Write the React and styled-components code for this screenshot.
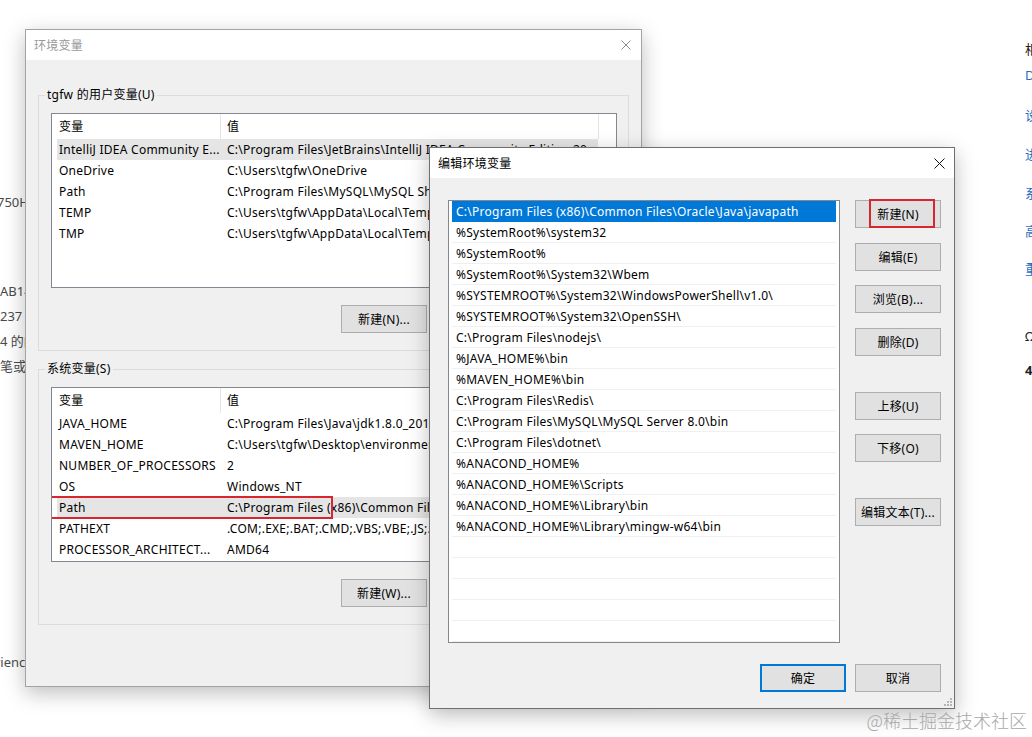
import React from "react";
import styled, { createGlobalStyle, css } from "styled-components";

const UI_FONT = `"Noto Sans", "Noto Sans CJK SC", sans-serif`;

const GlobalStyle = createGlobalStyle`
  html, body {
    margin: 0;
    padding: 0;
    background: #fff;
  }
  body {
    font-family: ${UI_FONT};
  }
  * {
    box-sizing: border-box;
  }
`;

const Desktop = styled.div`
  position: relative;
  width: 1032px;
  height: 737px;
  overflow: hidden;
  background: #fff;
  display: flex;
  justify-content: space-between;
`;

/* page text peeking out from behind the windows */
const Strip = styled.div`
  width: ${(p) => p.$w}px;
  padding-top: ${(p) => p.$top}px;
  overflow: hidden;
  display: flex;
  flex-direction: column;
  font-family: ${UI_FONT};
  font-size: 13px;
  color: #4a4a4a;
`;

const StripLine = styled.div`
  height: 25px;
  line-height: 25px;
  margin-top: ${(p) => p.$gap || 0}px;
  white-space: nowrap;
  text-indent: ${(p) => p.$shift || 0}px;
  color: ${(p) => (p.$link ? "#1e70c1" : p.$dark ? "#222" : "inherit")};
  font-weight: ${(p) => (p.$bold ? 700 : 400)};
`;

const Window = styled.section`
  position: absolute;
  left: ${(p) => p.$x}px;
  top: ${(p) => p.$y}px;
  width: ${(p) => p.$w}px;
  height: ${(p) => p.$h}px;
  background: #f0f0f0;
  border: 1px solid ${(p) => (p.$active ? "#6f6f6f" : "#a3a3a3")};
  box-shadow: 0 6px 20px rgba(0, 0, 0, 0.26);
  display: flex;
  flex-direction: column;
  font-family: ${UI_FONT};
  font-size: 12px;
  letter-spacing: 0.25px;
  color: #000;
`;

const TitleBar = styled.header`
  height: 30px;
  flex-shrink: 0;
  background: #fff;
  display: flex;
  align-items: center;
  justify-content: space-between;
`;

const Title = styled.span`
  padding-left: 8px;
  font-size: 12px;
  color: ${(p) => (p.$active ? "#000" : "#999")};
`;

const CloseBox = styled.div`
  width: 30px;
  height: 30px;
  display: flex;
  align-items: center;
  justify-content: center;
`;

const Body = styled.div`
  flex: 1;
  display: flex;
  flex-direction: column;
  padding: 0 12px;
`;

const GroupBox = styled.fieldset`
  margin: ${(p) => p.$top}px 0 0;
  padding: 10px 11px 17px 12px;
  border: 1px solid #dcdcdc;
  min-width: 0;
`;

const Legend = styled.legend`
  margin-left: -6px;
  padding: 0 2px;
  line-height: 16px;
  font-size: 12px;
`;

const VarList = styled.div`
  height: 175px;
  background: #fff;
  border: 1px solid #828790;
  overflow: hidden;
  display: flex;
  flex-direction: column;
`;

const ListHead = styled.div`
  display: flex;
  height: 25px;
  flex-shrink: 0;
`;

const HeadCell = styled.div`
  width: ${(p) => p.$w}px;
  padding-left: ${(p) => p.$pad}px;
  line-height: 25px;
  border-right: 1px solid #e5e5e5;
`;

const VarRow = styled.div`
  position: relative;
  display: flex;
  width: 541px;
  height: 21px;
  flex-shrink: 0;
  margin-left: 5px;
  line-height: 21px;
  background: ${(p) => (p.$selected ? "#e5e5e5" : "transparent")};
`;

const NameCell = styled.div`
  width: 163px;
  padding-left: 2px;
  white-space: nowrap;
  overflow: hidden;
`;

const ValueCell = styled.div`
  flex: 1;
  min-width: 0;
  padding-left: 7px;
  white-space: nowrap;
  overflow: hidden;
  text-overflow: ellipsis;
`;

const Mark = styled.span`
  position: absolute;
  left: ${(p) => p.$l}px;
  top: ${(p) => p.$t}px;
  width: ${(p) => p.$w}px;
  height: ${(p) => p.$h}px;
  border: 2px solid #d7262d;
  pointer-events: none;
`;

const ButtonRow = styled.div`
  display: flex;
  justify-content: flex-end;
  gap: ${(p) => p.$gap || 7}px;
  margin-top: ${(p) => p.$top}px;
  padding-right: ${(p) => p.$right || 0}px;
`;

const Button = styled.button`
  position: relative;
  width: 86px;
  height: 28px;
  flex-shrink: 0;
  margin-top: ${(p) => p.$top || 0}px;
  padding: 0;
  background: #e1e1e1;
  border: 1px solid #adadad;
  font-family: ${UI_FONT};
  font-size: 12px;
  letter-spacing: 0.25px;
  color: #000;
  ${(p) =>
    p.$default &&
    css`
      border-color: #0078d7;
      box-shadow: inset 0 0 0 1px #0078d7;
    `}
`;

const EditBody = styled.div`
  position: relative;
  flex: 1;
  display: flex;
  flex-direction: column;
  padding: 22px 13px 0 18px;
`;

const EditMain = styled.div`
  display: flex;
  gap: 15px;
`;

const PathList = styled.div`
  width: 392px;
  height: 443px;
  background: #fff;
  border: 1px solid #828790;
  overflow: hidden;
`;

const PathItem = styled.div`
  height: 21px;
  margin: 0 3px;
  padding: 1px 0 0 4px;
  line-height: 19px;
  white-space: nowrap;
  border-bottom: 1px solid #f0f0f0;
  ${(p) =>
    p.$selected &&
    css`
      background: #0078d7;
      border-bottom-color: #0078d7;
      color: #fff;
    `}
`;

const SideButtons = styled.div`
  display: flex;
  flex-direction: column;
  width: 86px;
`;

const Grip = styled.svg`
  position: absolute;
  right: 2px;
  bottom: 2px;
`;

const Watermark = styled.div`
  position: absolute;
  right: 5px;
  bottom: 5px;
  line-height: 24px;
  font-family: "Noto Sans CJK SC", sans-serif;
  font-size: 18px;
  font-weight: 300;
  color: #a8a8a8;
`;

function CloseIcon({ size, color }) {
  const e = size - 0.5;
  return (
    <svg width={size} height={size} viewBox={`0 0 ${size} ${size}`}>
      <path
        d={`M0.5 0.5L${e} ${e}M${e} 0.5L0.5 ${e}`}
        stroke={color}
        strokeWidth="1"
        fill="none"
      />
    </svg>
  );
}

const userVars = [
  ["IntelliJ IDEA Community E...", "C:\\Program Files\\JetBrains\\IntelliJ IDEA Community Edition 2020.3.2\\bin;", true],
  ["OneDrive", "C:\\Users\\tgfw\\OneDrive"],
  ["Path", "C:\\Program Files\\MySQL\\MySQL Shell 8.0\\bin\\;C:\\Users\\tgfw\\AppData\\Local\\Microsoft\\WindowsApps;"],
  ["TEMP", "C:\\Users\\tgfw\\AppData\\Local\\Temp"],
  ["TMP", "C:\\Users\\tgfw\\AppData\\Local\\Temp"],
];

const systemVars = [
  ["JAVA_HOME", "C:\\Program Files\\Java\\jdk1.8.0_201"],
  ["MAVEN_HOME", "C:\\Users\\tgfw\\Desktop\\environment\\apache-maven-3.6.3"],
  ["NUMBER_OF_PROCESSORS", "2"],
  ["OS", "Windows_NT"],
  ["Path", "C:\\Program Files (x86)\\Common Files\\Oracle\\Java\\javapath;%SystemRoot%\\system32;", true, true],
  ["PATHEXT", ".COM;.EXE;.BAT;.CMD;.VBS;.VBE;.JS;.JSE;.WSF;.WSH;.MSC"],
  ["PROCESSOR_ARCHITECT...", "AMD64"],
];

const paths = [
  "C:\\Program Files (x86)\\Common Files\\Oracle\\Java\\javapath",
  "%SystemRoot%\\system32",
  "%SystemRoot%",
  "%SystemRoot%\\System32\\Wbem",
  "%SYSTEMROOT%\\System32\\WindowsPowerShell\\v1.0\\",
  "%SYSTEMROOT%\\System32\\OpenSSH\\",
  "C:\\Program Files\\nodejs\\",
  "%JAVA_HOME%\\bin",
  "%MAVEN_HOME%\\bin",
  "C:\\Program Files\\Redis\\",
  "C:\\Program Files\\MySQL\\MySQL Server 8.0\\bin",
  "C:\\Program Files\\dotnet\\",
  "%ANACOND_HOME%",
  "%ANACOND_HOME%\\Scripts",
  "%ANACOND_HOME%\\Library\\bin",
  "%ANACOND_HOME%\\Library\\mingw-w64\\bin",
  "",
  "",
  "",
  "",
  "",
];

const sideButtons = [
  ["新建(N)", 0, true],
  ["编辑(E)", 15],
  ["浏览(B)...", 14],
  ["删除(D)", 15],
  ["上移(U)", 36],
  ["下移(O)", 14],
  ["编辑文本(T)...", 36],
];

function VariableTable({ rows }) {
  return (
    <VarList>
      <ListHead>
        <HeadCell $w={169} $pad={7}>变量</HeadCell>
        <HeadCell $w={378} $pad={6}>值</HeadCell>
      </ListHead>
      {rows.map(([name, value, selected, marked]) => (
        <VarRow key={name} $selected={selected}>
          <NameCell>{name}</NameCell>
          <ValueCell>{value}</ValueCell>
          {marked && <Mark $l={-9} $t={-1} $w={285} $h={23} />}
        </VarRow>
      ))}
    </VarList>
  );
}

export default function App() {
  return (
    <>
      <GlobalStyle />
      <Desktop>
        <Strip $w={25} $top={190}>
          <StripLine $shift={-3}>750H</StripLine>
          <StripLine $gap={64}>AB14C</StripLine>
          <StripLine>237 </StripLine>
          <StripLine>4 的的</StripLine>
          <StripLine>笔或者</StripLine>
          <StripLine $gap={271} $shift={-5}>rience</StripLine>
        </Strip>
        <Strip $w={7} $top={37}>
          <StripLine $dark>相关</StripLine>
          <StripLine $gap={1} $link>D</StripLine>
          <StripLine $gap={15} $link>设置</StripLine>
          <StripLine $gap={14} $link>进入</StripLine>
          <StripLine $gap={14} $link>系统</StripLine>
          <StripLine $gap={13} $link>高级</StripLine>
          <StripLine $gap={13} $link>重置</StripLine>
          <StripLine $gap={42} $dark>Ω</StripLine>
          <StripLine $gap={9} $dark $bold>4</StripLine>
        </Strip>

        <Window $x={25} $y={29} $w={617} $h={658}>
          <TitleBar>
            <Title>环境变量</Title>
            <CloseBox>
              <CloseIcon size={10} color="#8c8c8c" />
            </CloseBox>
          </TitleBar>
          <Body>
            <GroupBox $top={27}>
              <Legend>tgfw 的用户变量(U)</Legend>
              <VariableTable rows={userVars} />
              <ButtonRow $top={17} $right={4}>
                <Button>新建(N)...</Button>
                <Button>编辑(E)...</Button>
                <Button>删除(D)</Button>
              </ButtonRow>
            </GroupBox>
            <GroupBox $top={10}>
              <Legend>系统变量(S)</Legend>
              <VariableTable rows={systemVars} />
              <ButtonRow $top={17} $right={4}>
                <Button>新建(W)...</Button>
                <Button>编辑(I)...</Button>
                <Button>删除(L)</Button>
              </ButtonRow>
            </GroupBox>
            <ButtonRow $top={21} $gap={9}>
              <Button>确定</Button>
              <Button>取消</Button>
            </ButtonRow>
          </Body>
        </Window>

        <Window $x={429} $y={147} $w={526} $h={562} $active>
          <TitleBar>
            <Title $active>编辑环境变量</Title>
            <CloseBox>
              <CloseIcon size={11} color="#111" />
            </CloseBox>
          </TitleBar>
          <EditBody>
            <EditMain>
              <PathList>
                {paths.map((p, i) => (
                  <PathItem key={i} $selected={i === 0}>
                    {p}
                  </PathItem>
                ))}
              </PathList>
              <SideButtons>
                {sideButtons.map(([label, top, marked]) => (
                  <Button key={label} $top={top}>
                    {label}
                    {marked && <Mark $l={13} $t={-2} $w={66} $h={29} />}
                  </Button>
                ))}
              </SideButtons>
            </EditMain>
            <ButtonRow $top={21} $gap={9}>
              <Button $default>确定</Button>
              <Button>取消</Button>
            </ButtonRow>
            <Grip width="10" height="10" viewBox="0 0 10 10">
              <g fill="#b5b5b5">
                <rect x="8" y="2" width="2" height="2" />
                <rect x="5" y="5" width="2" height="2" />
                <rect x="8" y="5" width="2" height="2" />
                <rect x="2" y="8" width="2" height="2" />
                <rect x="5" y="8" width="2" height="2" />
                <rect x="8" y="8" width="2" height="2" />
              </g>
            </Grip>
          </EditBody>
        </Window>

        <Watermark>@稀土掘金技术社区</Watermark>
      </Desktop>
    </>
  );
}
